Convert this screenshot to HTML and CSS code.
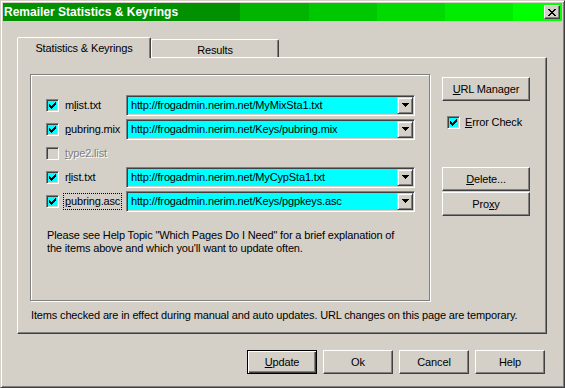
FILE: index.html
```html
<!DOCTYPE html>
<html lang="en">
<head>
    <meta charset="UTF-8">
    <title>Remailer Statistics &amp; Keyrings</title>
    <link rel="stylesheet" href="styles.css">
</head>
<body>
    <div class="window">
        <div class="titlebar">
            <span class="title">Remailer Statistics &amp; Keyrings</span>
            <button class="close">
                <svg width="8" height="7" viewBox="0 0 8 7"><path d="M0 0h2v1H0zM6 0h2v1H6zM1 1h2v1H1zM5 1h2v1H5zM2 2h4v1H2zM3 3h2v1H3zM2 4h4v1H2zM1 5h2v1H1zM5 5h2v1H5zM0 6h2v1H0zM6 6h2v1H6z"/></svg>
            </button>
        </div>

        <div class="client">
            <div class="tabs">
                <div class="tab active">Statistics &amp; Keyrings</div>
                <div class="tab results">Results</div>
            </div>

            <div class="panel">
                <div class="panel-main">
                    <div class="groupbox">
                        <div class="row">
                            <span class="checkbox"><svg width="11" height="11" viewBox="0 0 11 11"><path d="M2 4h1v3H2zM3 5h1v3H3zM4 6h1v3H4zM5 5h1v3H5zM6 4h1v3H6zM7 3h1v3H7zM8 2h1v3H8z"/></svg></span>
                            <span class="label-cell"><span class="label">m<u>l</u>ist.txt</span></span>
                            <div class="combo">
                                <span class="combo-text">http://frogadmin.nerim.net/MyMixSta1.txt</span>
                                <span class="combo-btn"><svg width="7" height="4" viewBox="0 0 7 4"><path d="M0 0h7v1H0zM1 1h5v1H1zM2 2h3v1H2zM3 3h1v1H3z"/></svg></span>
                            </div>
                        </div>
                        <div class="row">
                            <span class="checkbox"><svg width="11" height="11" viewBox="0 0 11 11"><path d="M2 4h1v3H2zM3 5h1v3H3zM4 6h1v3H4zM5 5h1v3H5zM6 4h1v3H6zM7 3h1v3H7zM8 2h1v3H8z"/></svg></span>
                            <span class="label-cell"><span class="label"><u>p</u>ubring.mix</span></span>
                            <div class="combo">
                                <span class="combo-text">http://frogadmin.nerim.net/Keys/pubring.mix</span>
                                <span class="combo-btn"><svg width="7" height="4" viewBox="0 0 7 4"><path d="M0 0h7v1H0zM1 1h5v1H1zM2 2h3v1H2zM3 3h1v1H3z"/></svg></span>
                            </div>
                        </div>
                        <div class="row">
                            <span class="checkbox disabled"></span>
                            <span class="label-cell"><span class="label disabled"><u>t</u>ype2.list</span></span>
                        </div>
                        <div class="row">
                            <span class="checkbox"><svg width="11" height="11" viewBox="0 0 11 11"><path d="M2 4h1v3H2zM3 5h1v3H3zM4 6h1v3H4zM5 5h1v3H5zM6 4h1v3H6zM7 3h1v3H7zM8 2h1v3H8z"/></svg></span>
                            <span class="label-cell"><span class="label">r<u>l</u>ist.txt</span></span>
                            <div class="combo">
                                <span class="combo-text">http://frogadmin.nerim.net/MyCypSta1.txt</span>
                                <span class="combo-btn"><svg width="7" height="4" viewBox="0 0 7 4"><path d="M0 0h7v1H0zM1 1h5v1H1zM2 2h3v1H2zM3 3h1v1H3z"/></svg></span>
                            </div>
                        </div>
                        <div class="row">
                            <span class="checkbox"><svg width="11" height="11" viewBox="0 0 11 11"><path d="M2 4h1v3H2zM3 5h1v3H3zM4 6h1v3H4zM5 5h1v3H5zM6 4h1v3H6zM7 3h1v3H7zM8 2h1v3H8z"/></svg></span>
                            <span class="label-cell"><span class="label focused"><u>p</u>ubring.asc</span></span>
                            <div class="combo">
                                <span class="combo-text">http://frogadmin.nerim.net/Keys/pgpkeys.asc</span>
                                <span class="combo-btn"><svg width="7" height="4" viewBox="0 0 7 4"><path d="M0 0h7v1H0zM1 1h5v1H1zM2 2h3v1H2zM3 3h1v1H3z"/></svg></span>
                            </div>
                        </div>

                        <p class="hint">Please see Help Topic "Which Pages Do I Need" for a brief explanation of<br>the items above and which you'll want to update often.</p>
                    </div>

                    <div class="side">
                        <button class="btn wide"><u>U</u>RL Manager</button>
                        <div class="side-check">
                            <span class="checkbox"><svg width="11" height="11" viewBox="0 0 11 11"><path d="M2 4h1v3H2zM3 5h1v3H3zM4 6h1v3H4zM5 5h1v3H5zM6 4h1v3H6zM7 3h1v3H7zM8 2h1v3H8z"/></svg></span>
                            <span class="label"><u>E</u>rror Check</span>
                        </div>
                        <button class="btn wide delete"><u>D</u>elete...</button>
                        <button class="btn wide proxy">Pro<u>x</u>y</button>
                    </div>
                </div>

                <p class="note">Items checked are in effect during manual and auto updates. URL changes on this page are temporary.</p>
            </div>

            <div class="actions">
                <button class="btn default"><u>U</u>pdate</button>
                <button class="btn">Ok</button>
                <button class="btn">Cancel</button>
                <button class="btn">Help</button>
            </div>
        </div>
    </div>
</body>
</html>
```

FILE: styles.css
```css
body {
    margin: 0;
    font-family: "Liberation Sans", Arial, sans-serif;
    font-size: 11px;
    letter-spacing: -0.15px;
    color: #000;
    background: #d4d0c8;
}
p {
    margin: 0;
}
u {
    text-underline-offset: 1px;
}
.window {
    box-sizing: border-box;
    width: 565px;
    height: 388px;
    padding: 2px;
    background: #d4d0c8;
    border: 1px solid;
    border-color: #d4d0c8 #404040 #404040 #d4d0c8;
    box-shadow: inset 1px 1px #fff, inset -1px -1px #808080;
}
.titlebar {
    height: 18px;
    display: flex;
    align-items: center;
    justify-content: space-between;
    padding: 0 2px 0 1px;
    background: linear-gradient(to right,
        #009000 0, #009000 237px,
        #00b400 237px, #00b400 306px,
        #00c800 306px, #00c800 374px,
        #00da00 374px, #00da00 442px,
        #00ec00 442px, #00ec00 510px,
        #00ff00 510px);
    color: #fff;
    font-size: 12px;
    font-weight: bold;
    letter-spacing: 0;
}
.close {
    box-sizing: border-box;
    width: 16px;
    height: 14px;
    padding: 0;
    display: flex;
    align-items: center;
    justify-content: center;
    background: #d4d0c8;
    border: 1px solid;
    border-color: #fff #404040 #404040 #fff;
    box-shadow: inset -1px -1px #808080;
}
.close svg {
    display: block;
}
.client {
    padding: 16px 15px 0 14px;
}
.tabs {
    display: flex;
    align-items: flex-end;
    height: 20px;
}
.tab {
    box-sizing: border-box;
    height: 18px;
    display: flex;
    align-items: center;
    justify-content: center;
    border: 1px solid;
    border-bottom: 0;
    border-color: #fff #404040 transparent #fff;
    border-radius: 2px 2px 0 0;
    box-shadow: inset -1px 0 #808080;
}
.tab.active {
    width: 134px;
    height: 21px;
    margin-bottom: -1px;
    position: relative;
    z-index: 1;
    background: #d4d0c8;
    padding-bottom: 1px;
}
.tab.results {
    width: 128px;
    padding-top: 2px;
}
.panel {
    box-sizing: border-box;
    width: 530px;
    height: 277px;
    padding: 16px 0 0 12px;
    border: 1px solid;
    border-color: #fff #404040 #404040 #fff;
    box-shadow: inset -1px -1px #808080;
}
.panel-main {
    display: flex;
    align-items: flex-start;
}
.groupbox {
    box-sizing: border-box;
    width: 400px;
    height: 227px;
    padding: 18px 0 0 15px;
    border: 1px solid #808080;
    box-shadow: inset 1px 1px #fff, 1px 1px #fff;
}
.row {
    display: flex;
    align-items: center;
    height: 24px;
}
.checkbox {
    box-sizing: border-box;
    width: 13px;
    height: 13px;
    flex: none;
    background: #0ff;
    border: 1px solid;
    border-color: #808080 #fff #fff #808080;
    box-shadow: inset 1px 1px #404040, inset -1px -1px #d4d0c8;
}
.checkbox svg {
    display: block;
}
.checkbox.disabled {
    background: #d4d0c8;
}
.label-cell {
    width: 67px;
    flex: none;
}
.label {
    display: inline-block;
    margin-left: 4px;
    padding: 0 1px;
    line-height: 15px;
    border: 1px solid transparent;
}
.label.focused {
    border: 1px dotted #000;
}
.label.disabled {
    color: #808080;
    text-shadow: 1px 1px 0 #fff;
}
.combo {
    box-sizing: border-box;
    width: 289px;
    height: 21px;
    padding: 1px;
    display: flex;
    background: #0ff;
    border: 1px solid;
    border-color: #808080 #fff #fff #808080;
    box-shadow: inset 1px 1px #404040, inset -1px -1px #d4d0c8;
}
.combo-text {
    flex: 1;
    padding-left: 3px;
    line-height: 17px;
    white-space: nowrap;
    overflow: hidden;
}
.combo-btn {
    box-sizing: border-box;
    width: 16px;
    height: 17px;
    display: flex;
    align-items: center;
    justify-content: center;
    background: #d4d0c8;
    border: 1px solid;
    border-color: #d4d0c8 #404040 #404040 #d4d0c8;
    box-shadow: inset 1px 1px #fff, inset -1px -1px #808080;
}
.combo-btn svg {
    display: block;
}
.hint {
    margin: 16px 0 0 1px;
    line-height: 13px;
}
.side {
    display: flex;
    flex-direction: column;
    align-items: flex-start;
    margin: 3px 0 0 12px;
}
.side-check {
    display: flex;
    align-items: center;
    margin: 13px 0 0 5px;
}
.side-check .label {
    margin-left: 3px;
}
.btn {
    box-sizing: border-box;
    width: 70px;
    height: 24px;
    padding: 0;
    font: inherit;
    letter-spacing: inherit;
    color: #000;
    background: #d4d0c8;
    border: 1px solid;
    border-color: #fff #404040 #404040 #fff;
    box-shadow: inset -1px -1px #808080;
}
.btn.wide {
    width: 88px;
}
.btn.default {
    border-color: #000;
    box-shadow: inset 1px 1px #fff, inset -1px -1px #404040, inset -2px -2px #808080;
}
.delete {
    margin-top: 36px;
}
.proxy {
    margin-top: 1px;
}
.note {
    margin: 8px 0 0 1px;
    line-height: 13px;
}
.actions {
    display: flex;
    justify-content: flex-end;
    gap: 6px;
    margin-top: 16px;
    padding-right: 2px;
}
```
